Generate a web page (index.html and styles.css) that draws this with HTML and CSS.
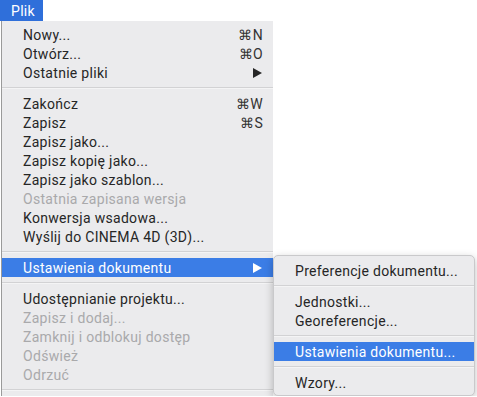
FILE: index.html
```html
<!DOCTYPE html>
<html lang="pl">
<head>
    <meta charset="UTF-8">
    <title>Plik</title>
    <link rel="stylesheet" href="styles.css">
</head>
<body>
<div class="menubar">
    <span class="menu-title">Plik</span>
</div>
<div class="menu">
    <div class="item"><span>Nowy...</span><span class="key">⌘N</span></div>
    <div class="item"><span>Otwórz...</span><span class="key">⌘O</span></div>
    <div class="item"><span>Ostatnie pliki</span><span class="arrow"></span></div>
    <div class="sep"></div>
    <div class="item"><span>Zakończ</span><span class="key">⌘W</span></div>
    <div class="item"><span>Zapisz</span><span class="key">⌘S</span></div>
    <div class="item"><span>Zapisz jako...</span></div>
    <div class="item"><span>Zapisz kopię jako...</span></div>
    <div class="item"><span>Zapisz jako szablon...</span></div>
    <div class="item disabled"><span>Ostatnia zapisana wersja</span></div>
    <div class="item"><span>Konwersja wsadowa...</span></div>
    <div class="item"><span>Wyślij do CINEMA 4D (3D)...</span></div>
    <div class="sep"></div>
    <div class="item active"><span>Ustawienia dokumentu</span><span class="arrow"></span></div>
    <div class="sep"></div>
    <div class="item"><span>Udostępnianie projektu...</span></div>
    <div class="item disabled"><span>Zapisz i dodaj...</span></div>
    <div class="item disabled"><span>Zamknij i odblokuj dostęp</span></div>
    <div class="item disabled"><span>Odśwież</span></div>
    <div class="item disabled"><span>Odrzuć</span></div>
    <div class="sep"></div>

    <div class="submenu">
        <div class="item"><span>Preferencje dokumentu...</span></div>
        <div class="sep"></div>
        <div class="item"><span>Jednostki...</span></div>
        <div class="item"><span>Georeferencje...</span></div>
        <div class="sep"></div>
        <div class="item active"><span>Ustawienia dokumentu...</span></div>
        <div class="sep"></div>
        <div class="item"><span>Wzory...</span></div>
    </div>
</div>
</body>
</html>
```

FILE: styles.css
```css
body {
    margin: 0;
    background-color: #ffffff;
    font-family: Roboto, "Noto Sans", sans-serif;
    font-size: 14px;
    letter-spacing: 0.3px;
    color: #262626;
    overflow: hidden;
}
.menubar {
    height: 21px;
    display: flex;
}
.menu-title {
    display: flex;
    align-items: center;
    width: 43px;
    padding-left: 11px;
    box-sizing: border-box;
    background-color: #2f6fda;
    color: #ffffff;
}
.menu {
    position: relative;
    width: 271px;
    margin-left: 1px;
    padding-top: 4px;
    border-left: 1px solid #9a9a9a;
    background-color: #ebebed;
}
.item {
    display: flex;
    align-items: center;
    justify-content: space-between;
    height: 19px;
    padding: 0 10px 0 21px;
}
.item.disabled {
    color: #a9a9ab;
}
.item.active {
    background-color: #3b7de6;
    color: #ffffff;
}
.key {
    color: #333333;
}
.arrow {
    width: 0;
    height: 0;
    margin-right: 1px;
    border-top: 5px solid transparent;
    border-bottom: 5px solid transparent;
    border-left: 9px solid #262626;
}
.item.active .arrow {
    border-left-color: #ffffff;
}
.sep {
    height: 12px;
    display: flex;
    flex-direction: column;
    justify-content: center;
}
.sep:before {
    content: '';
    display: block;
    height: 1px;
    background-color: #d2d2d4;
    border-bottom: 1px solid #f4f4f5;
}
.submenu {
    position: absolute;
    top: 234px;
    left: 271px;
    width: 200px;
    padding: 5px 0 3px;
    background-color: #ebebed;
    border: 1px solid #c9c9cb;
    border-radius: 5px;
    box-shadow: 0 3px 8px rgba(0, 0, 0, 0.25);
}
.submenu .item {
    padding-left: 21px;
}
```
